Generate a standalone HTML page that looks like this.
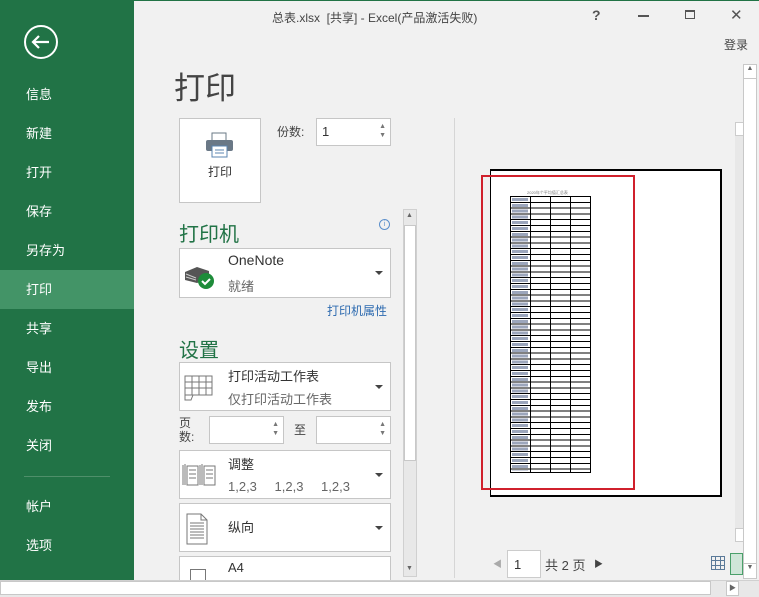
<!DOCTYPE html>
<html><head><meta charset="utf-8"><style>
*{margin:0;padding:0;box-sizing:border-box}
body{width:759px;height:597px;overflow:hidden;background:#f1f1f1;font-family:"Liberation Sans","Noto Sans CJK SC",sans-serif;position:relative;color:#444}
.a{position:absolute}
#side{left:0;top:0;width:134px;height:580px;background:#217346;color:#fff}
#side div.i{position:absolute;left:26px;font-size:13px}
.box{position:absolute;background:#fff;border:1px solid #c6c6c6}
.dd{position:absolute;right:7px;width:0;height:0;border-left:4px solid transparent;border-right:4px solid transparent;border-top:4px solid #444}
.spin{position:absolute;right:4px;font-size:7px;color:#777;line-height:9px}
h2{position:absolute;font-weight:normal;color:#217346;font-size:20px}
</style></head><body>
<div class="a" style="left:0;top:0;width:759px;height:1px;background:#217346"></div>
<div id="side" class="a">
<svg class="a" style="left:23px;top:25px" width="36" height="36"><circle cx="18" cy="17" r="16" fill="none" stroke="#fff" stroke-width="2"/><path d="M10 17h16M16 11l-6 6 6 6" fill="none" stroke="#fff" stroke-width="2.2"/></svg>
<div class="i" style="top:84px">信息</div>
<div class="i" style="top:123px">新建</div>
<div class="i" style="top:162px">打开</div>
<div class="i" style="top:201px">保存</div>
<div class="i" style="top:240px">另存为</div>
<div class="a" style="left:0;top:270px;width:134px;height:39px;background:#439467"></div>
<div class="i" style="top:279px">打印</div>
<div class="i" style="top:318px">共享</div>
<div class="i" style="top:357px">导出</div>
<div class="i" style="top:396px">发布</div>
<div class="i" style="top:435px">关闭</div>
<div class="a" style="left:24px;top:476px;width:86px;height:1px;background:#4f8f6a"></div>
<div class="i" style="top:496px">帐户</div>
<div class="i" style="top:535px">选项</div>
</div>
<div class="a" style="left:272px;top:9px;font-size:12px;color:#444">总表.xlsx &nbsp;[共享] - Excel(产品激活失败)</div>
<div class="a" style="left:592px;top:7px;font-size:14px;font-weight:bold;color:#555">?</div>
<div class="a" style="left:638px;top:15px;width:11px;height:1.5px;background:#555"></div>
<div class="a" style="left:685px;top:10px;width:10px;height:9px;border:1px solid #555;border-top-width:2px"></div>
<div class="a" style="left:730px;top:6px;font-size:15px;color:#555">✕</div>
<div class="a" style="left:724px;top:36px;font-size:12px;color:#444">登录</div>
<div class="a" style="left:174px;top:63px;font-size:31px;color:#444">打印</div>
<div class="box" style="left:179px;top:118px;width:82px;height:85px">
<svg class="a" style="left:25px;top:13px" width="30" height="26"><rect x="7" y="1" width="14" height="8" fill="#fff" stroke="#6a7886"/><rect x="1" y="8" width="27" height="11" rx="2" fill="#6a7886"/><rect x="7" y="14" width="15" height="11" fill="#fff" stroke="#5b84b0"/><path d="M10 18h9M10 21h9" stroke="#5b84b0"/></svg>
<div class="a" style="left:28px;top:44px;font-size:12px;color:#333">打印</div></div>
<div class="a" style="left:277px;top:123px;font-size:12px">份数:</div>
<div class="box" style="left:316px;top:118px;width:75px;height:28px"><span class="a" style="left:5px;top:5px;font-size:13px;color:#333">1</span><span class="spin" style="top:3px">▲<br>▼</span></div>
<h2 style="left:179px;top:218px">打印机</h2>
<div class="a" style="left:379px;top:219px;width:11px;height:11px;border:1px solid #5b8fcb;border-radius:50%;font-size:7px;color:#5b8fcb;text-align:center;line-height:9px">i</div>
<div class="box" style="left:179px;top:248px;width:212px;height:50px">
<svg class="a" style="left:2px;top:13px" width="34" height="28"><path d="M3 10l12-5 12 4v8l-12 4-12-3z" fill="#555"/><path d="M4 12l10 4M4 15l10 3" stroke="#ccc"/><circle cx="24" cy="19" r="8" fill="#1e8c3a"/><path d="M20 19l3 3 5-5" stroke="#fff" stroke-width="2" fill="none"/></svg>
<div class="a" style="left:48px;top:3px;font-size:14px;color:#333">OneNote</div>
<div class="a" style="left:48px;top:27px;font-size:13px;color:#666">就绪</div><div class="dd" style="top:22px"></div></div>
<div class="a" style="left:327px;top:302px;font-size:12px;color:#2e6bb0">打印机属性</div>
<h2 style="left:179px;top:334px">设置</h2>
<div class="box" style="left:179px;top:362px;width:212px;height:49px">
<svg class="a" style="left:4px;top:12px" width="30" height="26"><g stroke="#777" fill="none"><rect x="1" y="1" width="27" height="19"/><path d="M1 7h27M1 13h27M8 1v19M15 1v19M22 1v19M1 20v5h6l2-5"/></g></svg>
<div class="a" style="left:48px;top:3px;font-size:13px;color:#333">打印活动工作表</div>
<div class="a" style="left:48px;top:26px;font-size:13px;color:#666">仅打印活动工作表</div><div class="dd" style="top:22px"></div></div>
<div class="a" style="left:179px;top:416px;font-size:12px;line-height:14px">页<br>数:</div>
<div class="box" style="left:209px;top:416px;width:75px;height:28px"><span class="spin" style="top:3px">▲<br>▼</span></div>
<div class="a" style="left:294px;top:421px;font-size:12px">至</div>
<div class="box" style="left:316px;top:416px;width:75px;height:28px"><span class="spin" style="top:3px">▲<br>▼</span></div>
<div class="box" style="left:179px;top:450px;width:212px;height:49px">
<svg class="a" style="left:2px;top:12px" width="34" height="26"><g stroke="#777" fill="none"><path d="M1 2v20M3 1v21M5 3h11v19H5zM7 7h7M7 11h7M7 15h7M18 2v20M20 1v21M22 3h11v19H22zM24 7h7M24 11h7M24 15h7"/></g></svg>
<div class="a" style="left:48px;top:3px;font-size:13px;color:#333">调整</div>
<div class="a" style="left:48px;top:28px;font-size:13px;color:#666;word-spacing:14px">1,2,3 1,2,3 1,2,3</div><div class="dd" style="top:22px"></div></div>
<div class="box" style="left:179px;top:503px;width:212px;height:49px">
<svg class="a" style="left:6px;top:9px" width="24" height="32"><path d="M1 1h14l6 6v24H1z M15 1v6h6 M4 10h14M4 13h14M4 16h14M4 19h14M4 22h14M4 25h14" stroke="#777" fill="none"/></svg>
<div class="a" style="left:48px;top:13px;font-size:13px;color:#333">纵向</div><div class="dd" style="top:22px"></div></div>
<div class="box" style="left:179px;top:556px;width:212px;height:30px"><div class="a" style="left:48px;top:3px;font-size:13px;color:#333">A4</div><div class="a" style="left:10px;top:12px;width:16px;height:14px;border:1px solid #777"></div></div>
<div class="a" style="left:403px;top:209px;width:14px;height:368px;background:#e8e8e8;border:1px solid #d0d0d0"></div>
<div class="a" style="left:404px;top:225px;width:12px;height:236px;background:#fff;border:1px solid #c8c8c8"></div>
<div class="a" style="left:406px;top:212px;font-size:7px;color:#666">▲</div>
<div class="a" style="left:406px;top:565px;font-size:7px;color:#666">▼</div>
<div class="a" style="left:454px;top:118px;width:1px;height:460px;background:#d6d6d6"></div>
<div class="a" style="left:490px;top:169px;width:232px;height:328px;background:#fff;border:2px solid #000;border-left-width:1px"></div>
<div class="a" style="left:481px;top:175px;width:154px;height:315px;border:2px solid #d0202c"></div>
<div class="a" style="left:527px;top:190px;font-size:4px;color:#777">2020年个平均值汇总表</div>
<div class="a" style="left:510px;top:196px;width:81px;height:277px;border:1px solid #000;background:repeating-linear-gradient(to right,transparent 0 19px,#000 19px 20px),repeating-linear-gradient(to bottom,transparent 0 4.8px,#000 4.8px 5.8px)"></div>
<div class="a" style="left:512px;top:198px;width:16px;height:273px;background:repeating-linear-gradient(to bottom,#5a6a90 0 3px,transparent 3px 5.8px);opacity:.6"></div>
<div class="a" style="left:735px;top:122px;width:9px;height:420px;background:#e8e8e8"></div>
<div class="a" style="left:735px;top:122px;width:9px;height:14px;background:#fff;border:1px solid #ccc"></div>
<div class="a" style="left:735px;top:528px;width:9px;height:14px;background:#fff;border:1px solid #ccc"></div>
<div class="a" style="left:743px;top:64px;width:14px;height:515px;background:#fff;border:1px solid #c8c8c8"></div>
<div class="a" style="left:744px;top:65px;width:12px;height:14px;border-bottom:1px solid #c8c8c8;font-size:7px;color:#666;text-align:center">▲</div>
<div class="a" style="left:744px;top:563px;width:12px;height:14px;border-top:1px solid #c8c8c8;font-size:7px;color:#666;text-align:center">▼</div>
<div class="a" style="left:493px;top:557px;font-size:9px;color:#aaa">◀</div>
<div class="box" style="left:507px;top:550px;width:34px;height:28px;border-color:#ccc"><span class="a" style="left:6px;top:6px;font-size:13px;color:#333">1</span></div>
<div class="a" style="left:545px;top:555px;font-size:13px;color:#444">共 2 页</div>
<div class="a" style="left:594px;top:557px;font-size:9px;color:#444">▶</div>
<svg class="a" style="left:711px;top:556px" width="14" height="14"><path d="M.5.5h13v13H.5zM4.5.5v13M9.5.5v13M.5 4.5h13M.5 9.5h13" stroke="#5b7a99" fill="none"/></svg>
<div class="a" style="left:730px;top:553px;width:13px;height:22px;background:#cfe6d8;border:1px solid #4aa06a"></div>
<div class="a" style="left:0;top:580px;width:759px;height:17px;background:#e8e8e8;border-top:1px solid #d0d0d0"></div>
<div class="a" style="left:0;top:581px;width:711px;height:14px;background:#fff;border:1px solid #c8c8c8"></div>
<div class="a" style="left:726px;top:581px;width:13px;height:15px;background:#fff;border:1px solid #c8c8c8;font-size:7px;color:#666;text-align:center;line-height:13px">▶</div>
</body></html>
